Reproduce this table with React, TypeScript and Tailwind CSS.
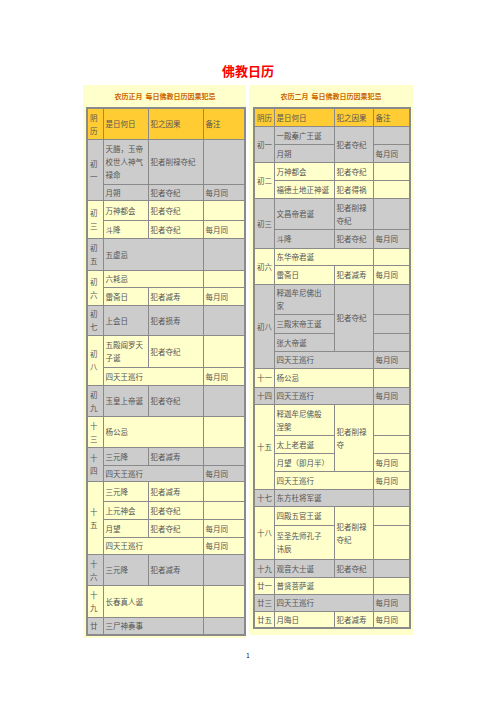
import React from "react";

type Bg = "g" | "y" | "h";
const bgMap: Record<Bg, string> = {
  g: "bg-[#cccccc]",
  y: "bg-[#ffffcc]",
  h: "bg-[#ffcc33]",
};

function C({
  children,
  bg,
  rs,
  cs,
}: {
  children?: React.ReactNode;
  bg: Bg;
  rs?: number;
  cs?: number;
}) {
  return (
    <td
      rowSpan={rs}
      colSpan={cs}
      className={`${bgMap[bg]} border border-[#8a8a8a] px-[2px] py-0 align-middle leading-[13px] text-left whitespace-nowrap overflow-visible`}
    >
      {children}
    </td>
  );
}

function LeftTable() {
  return (
    <table className="table-fixed border-collapse border-2 border-[#8a8a8a] w-[158px] text-[7.5px] text-[#555]">
      <colgroup>
        <col className="w-[16px]" />
        <col className="w-[45px]" />
        <col className="w-[55px]" />
        <col className="w-[42px]" />
      </colgroup>
      <tbody>
        <tr className="h-[31px]">
          <C bg="h">阴<br />历</C>
          <C bg="h">是日何日</C>
          <C bg="h">犯之因果</C>
          <C bg="h">备注</C>
        </tr>
        <tr className="h-[45px]">
          <C bg="g" rs={2}>初<br />一</C>
          <C bg="g">天腊，玉帝<br />校世人神气<br />禄命</C>
          <C bg="g">犯者削禄夺纪</C>
          <C bg="g"></C>
        </tr>
        <tr className="h-[16px]">
          <C bg="g">月朔</C>
          <C bg="g">犯者夺纪</C>
          <C bg="g">每月同</C>
        </tr>
        <tr className="h-[20px]">
          <C bg="y" rs={2}>初<br />三</C>
          <C bg="y">万神都会</C>
          <C bg="y">犯者夺纪</C>
          <C bg="y"></C>
        </tr>
        <tr className="h-[18px]">
          <C bg="y">斗降</C>
          <C bg="y">犯者夺纪</C>
          <C bg="y">每月同</C>
        </tr>
        <tr className="h-[32px]">
          <C bg="g">初<br />五</C>
          <C bg="g" cs={2}>五虚忌</C>
          <C bg="g"></C>
        </tr>
        <tr className="h-[17px]">
          <C bg="y" rs={2}>初<br />六</C>
          <C bg="y" cs={2}>六耗忌</C>
          <C bg="y"></C>
        </tr>
        <tr className="h-[18px]">
          <C bg="y">雷斋日</C>
          <C bg="y">犯者减寿</C>
          <C bg="y">每月同</C>
        </tr>
        <tr className="h-[30px]">
          <C bg="g">初<br />七</C>
          <C bg="g">上会日</C>
          <C bg="g">犯者损寿</C>
          <C bg="g"></C>
        </tr>
        <tr className="h-[32px]">
          <C bg="y" rs={2}>初<br />八</C>
          <C bg="y">五殿阎罗天<br />子诞</C>
          <C bg="y">犯者夺纪</C>
          <C bg="y"></C>
        </tr>
        <tr className="h-[18px]">
          <C bg="y" cs={2}>四天王巡行</C>
          <C bg="y">每月同</C>
        </tr>
        <tr className="h-[31px]">
          <C bg="g">初<br />九</C>
          <C bg="g">玉皇上帝诞</C>
          <C bg="g">犯者夺纪</C>
          <C bg="g"></C>
        </tr>
        <tr className="h-[31px]">
          <C bg="y">十<br />三</C>
          <C bg="y" cs={2}>杨公忌</C>
          <C bg="y"></C>
        </tr>
        <tr className="h-[18px]">
          <C bg="g" rs={2}>十<br />四</C>
          <C bg="g">三元降</C>
          <C bg="g">犯者减寿</C>
          <C bg="g"></C>
        </tr>
        <tr className="h-[16px]">
          <C bg="g" cs={2}>四天王巡行</C>
          <C bg="g">每月同</C>
        </tr>
        <tr className="h-[20px]">
          <C bg="y" rs={4}>十<br />五</C>
          <C bg="y">三元降</C>
          <C bg="y">犯者减寿</C>
          <C bg="y"></C>
        </tr>
        <tr className="h-[18px]">
          <C bg="y">上元神会</C>
          <C bg="y">犯者夺纪</C>
          <C bg="y"></C>
        </tr>
        <tr className="h-[18px]">
          <C bg="y">月望</C>
          <C bg="y">犯者夺纪</C>
          <C bg="y">每月同</C>
        </tr>
        <tr className="h-[17px]">
          <C bg="y" cs={2}>四天王巡行</C>
          <C bg="y">每月同</C>
        </tr>
        <tr className="h-[31px]">
          <C bg="g">十<br />六</C>
          <C bg="g">三元降</C>
          <C bg="g">犯者减寿</C>
          <C bg="g"></C>
        </tr>
        <tr className="h-[32px]">
          <C bg="y">十<br />九</C>
          <C bg="y" cs={2}>长春真人诞</C>
          <C bg="y"></C>
        </tr>
        <tr className="h-[18px]">
          <C bg="g">廿</C>
          <C bg="g" cs={2}>三尸神奏事</C>
          <C bg="g"></C>
        </tr>
      </tbody>
    </table>
  );
}

function RightTable() {
  return (
    <table className="table-fixed border-collapse border-2 border-[#8a8a8a] w-[156px] text-[7.5px] text-[#555]">
      <colgroup>
        <col className="w-[20px]" />
        <col className="w-[60px]" />
        <col className="w-[39px]" />
        <col className="w-[37px]" />
      </colgroup>
      <tbody>
        <tr className="h-[18px]">
          <C bg="h">阴历</C>
          <C bg="h">是日何日</C>
          <C bg="h">犯之因果</C>
          <C bg="h">备注</C>
        </tr>
        <tr className="h-[18px]">
          <C bg="g" rs={2}>初一</C>
          <C bg="g">一殿秦广王诞</C>
          <C bg="g" rs={2}>犯者夺纪</C>
          <C bg="g"></C>
        </tr>
        <tr className="h-[18px]">
          <C bg="g">月朔</C>
          <C bg="g">每月同</C>
        </tr>
        <tr className="h-[18px]">
          <C bg="y" rs={2}>初二</C>
          <C bg="y">万神都会</C>
          <C bg="y">犯者夺纪</C>
          <C bg="y"></C>
        </tr>
        <tr className="h-[18px]">
          <C bg="y">福德土地正神诞</C>
          <C bg="y">犯者得祸</C>
          <C bg="y"></C>
        </tr>
        <tr className="h-[31px]">
          <C bg="g" rs={2}>初三</C>
          <C bg="g">文昌帝君诞</C>
          <C bg="g">犯者削禄<br />夺纪</C>
          <C bg="g"></C>
        </tr>
        <tr className="h-[19px]">
          <C bg="g">斗降</C>
          <C bg="g">犯者夺纪</C>
          <C bg="g">每月同</C>
        </tr>
        <tr className="h-[17px]">
          <C bg="y" rs={2}>初六</C>
          <C bg="y" cs={2}>东华帝君诞</C>
          <C bg="y"></C>
        </tr>
        <tr className="h-[19px]">
          <C bg="y">雷斋日</C>
          <C bg="y">犯者减寿</C>
          <C bg="y">每月同</C>
        </tr>
        <tr className="h-[30px]">
          <C bg="g" rs={4}>初八</C>
          <C bg="g">释迦牟尼佛出<br />家</C>
          <C bg="g" rs={3}>犯者夺纪</C>
          <C bg="g"></C>
        </tr>
        <tr className="h-[19px]">
          <C bg="g">三殿宋帝王诞</C>
          <C bg="g"></C>
        </tr>
        <tr className="h-[18px]">
          <C bg="g">张大帝诞</C>
          <C bg="g"></C>
        </tr>
        <tr className="h-[17px]">
          <C bg="g" cs={2}>四天王巡行</C>
          <C bg="g">每月同</C>
        </tr>
        <tr className="h-[19px]">
          <C bg="y">十一</C>
          <C bg="y" cs={2}>杨公忌</C>
          <C bg="y"></C>
        </tr>
        <tr className="h-[17px]">
          <C bg="g">十四</C>
          <C bg="g" cs={2}>四天王巡行</C>
          <C bg="g">每月同</C>
        </tr>
        <tr className="h-[31px]">
          <C bg="y" rs={4}>十五</C>
          <C bg="y">释迦牟尼佛般<br />涅槃</C>
          <C bg="y" rs={3}>犯者削禄<br />夺</C>
          <C bg="y"></C>
        </tr>
        <tr className="h-[18px]">
          <C bg="y">太上老君诞</C>
          <C bg="y"></C>
        </tr>
        <tr className="h-[18px]">
          <C bg="y">月望（即月半）</C>
          <C bg="y">每月同</C>
        </tr>
        <tr className="h-[18px]">
          <C bg="y" cs={2}>四天王巡行</C>
          <C bg="y">每月同</C>
        </tr>
        <tr className="h-[17px]">
          <C bg="g">十七</C>
          <C bg="g" cs={2}>东方杜将军诞</C>
          <C bg="g"></C>
        </tr>
        <tr className="h-[19px]">
          <C bg="y" rs={2}>十八</C>
          <C bg="y">四殿五官王诞</C>
          <C bg="y" rs={2}>犯者削禄<br />夺纪</C>
          <C bg="y"></C>
        </tr>
        <tr className="h-[34px]">
          <C bg="y">至圣先师孔子<br />讳辰</C>
          <C bg="y"></C>
        </tr>
        <tr className="h-[18px]">
          <C bg="g">十九</C>
          <C bg="g">观音大士诞</C>
          <C bg="g">犯者夺纪</C>
          <C bg="g"></C>
        </tr>
        <tr className="h-[17px]">
          <C bg="y">廿一</C>
          <C bg="y" cs={2}>普贤菩萨诞</C>
          <C bg="y"></C>
        </tr>
        <tr className="h-[17px]">
          <C bg="g">廿三</C>
          <C bg="g" cs={2}>四天王巡行</C>
          <C bg="g">每月同</C>
        </tr>
        <tr className="h-[17px]">
          <C bg="y">廿五</C>
          <C bg="y">月晦日</C>
          <C bg="y">犯者减寿</C>
          <C bg="y">每月同</C>
        </tr>
      </tbody>
    </table>
  );
}

export default function App() {
  return (
    <div className="w-[496px] h-[702px] bg-white font-['Noto_Sans_CJK_SC',sans-serif]">
      <div className="pt-[63px] text-center text-[13px] leading-[16px] font-bold text-[#ff0000]">
        佛教日历
      </div>
      <div className="flex items-start gap-[3px] ml-[83px] mt-[6px]">
        <div className="w-[163px] bg-[#ffffcc] pl-[3px] pr-[2px] pb-[2px]">
          <div className="h-[22px] flex items-center justify-center text-[7px] font-bold text-[#cc6600] whitespace-nowrap">
            农历正月&nbsp;&nbsp;每日佛教日历因果犯忌
          </div>
          <LeftTable />
        </div>
        <div className="w-[164px] bg-[#ffffcc] pl-[4px] pr-[4px] pb-[6px]">
          <div className="h-[22px] flex items-center justify-center text-[7px] font-bold text-[#cc6600] whitespace-nowrap">
            农历二月&nbsp;&nbsp;每日佛教日历因果犯忌
          </div>
          <RightTable />
        </div>
      </div>
      <div className="mt-[14px] text-center text-[6px] leading-[8px] text-black">1</div>
    </div>
  );
}
